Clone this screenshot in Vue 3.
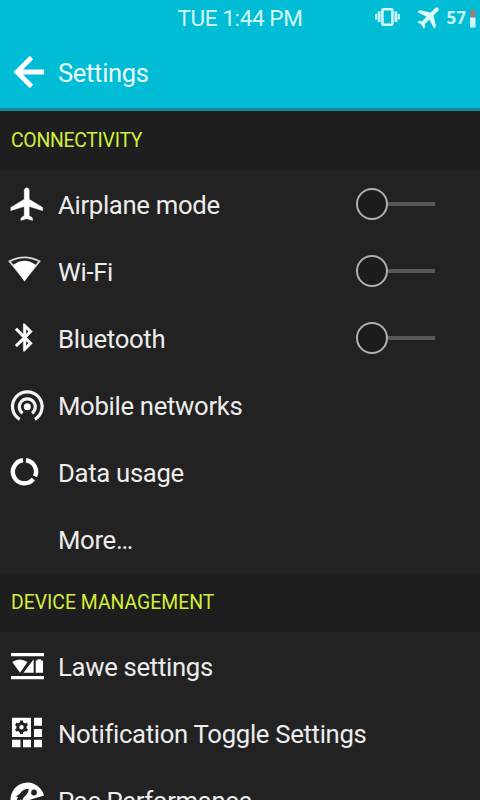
<script setup>
const connectivity = [
  { label: 'Airplane mode', icon: 'airplane', toggle: true },
  { label: 'Wi-Fi', icon: 'wifi', toggle: true },
  { label: 'Bluetooth', icon: 'bluetooth', toggle: true },
  { label: 'Mobile networks', icon: 'mobile' },
  { label: 'Data usage', icon: 'data' },
  { label: 'More…', icon: '' },
]
const device = [
  { label: 'Lawe settings', icon: 'lawe' },
  { label: 'Notification Toggle Settings', icon: 'toggles' },
  { label: 'Pac Performance', icon: 'pac' },
]
const sections = [
  { title: 'CONNECTIVITY', items: connectivity },
  { title: 'DEVICE MANAGEMENT', items: device },
]
</script>

<template>
  <div class="screen">
    <header class="top">
      <div class="status">
        <span class="clock">TUE 1:44 PM</span>
        <svg class="status-icons" viewBox="0 0 110 36" width="110" height="36">
          <g fill="#c5f3f8">
            <rect x="12.4" y="9.3" width="10" height="15.4" rx="1" fill="none" stroke="#d5f8fb" stroke-width="2.6" />
            <rect x="7.600" y="11.5" width="3" height="10.5" />
            <rect x="5" y="14" width="2.2" height="5.5" />
            <rect x="24.400" y="11.5" width="3" height="10.5" />
            <rect x="27.800" y="14" width="2.2" height="5.5" />
          </g>
          <path transform="translate(59.400 16.700) rotate(45) scale(1.220) translate(-11.5 -12)" fill="#e2fafc" stroke="#e2fafc" stroke-width="0.300" d="M21 16v-2l-8-5V3.500c0-.83-.67-1.500-1.500-1.500S10 2.670 10 3.500V9l-8 5v2l8-2.500V19l-2 1.500V22l3.500-1 3.500 1v-1.500L13 19v-5.500l8 2.500z" />
          <text class="percent" x="76.500" y="24">57</text>
          <rect x="101" y="9" width="3" height="2" fill="#8e8585" />
          <rect x="100" y="10" width="5.500" height="8" fill="#8e8585" />
          <rect x="100" y="17.500" width="5.500" height="10" fill="#d6f3f6" />
        </svg>
      </div>
      <div class="bar">
        <svg class="back" viewBox="0 0 58 74" width="58" height="74">
          <path d="M31.500 22.500L17 37L31.500 51.500M17 37H44" fill="none" stroke="#fff" stroke-width="4.800" />
        </svg>
        <h1>Settings</h1>
      </div>
    </header>

    <section v-for="s in sections" :key="s.title">
      <h2>{{ s.title }}</h2>
      <div v-for="item in s.items" :key="item.label" class="row">
        <svg class="icon" viewBox="0 0 58 67" width="58" height="67" fill="#fff">
          <path v-if="item.icon === 'airplane'" stroke="#fff" stroke-width="0.200" transform="translate(7.400 14.600) scale(1.680 1.630)" d="M21 16v-2l-8-5V3.500c0-.83-.67-1.500-1.500-1.500S10 2.670 10 3.500V9l-8 5v2l8-2.500V19l-2 1.500V22l3.500-1 3.500 1v-1.500L13 19v-5.500l8 2.500z" />
          <g v-else-if="item.icon === 'wifi'">
            <path d="M9.500 24.300Q24.500 16.500 39.500 24.300L24.500 42.500Z" fill="none" stroke="#d8d8d8" stroke-width="1.800" />
            <path d="M13 28Q24.500 19.500 36 28L24.500 44.500Z" />
          </g>
          <path v-else-if="item.icon === 'bluetooth'" stroke="#fff" stroke-width="0.300" transform="translate(8.200 17) scale(1.370)" d="M17.710 7.710L12 2h-1v7.590L6.410 5 5 6.410 10.590 12 5 17.590 6.410 19 11 14.410V22h1l5.710-5.710-4.300-4.290 4.300-4.290zM13 5.830l1.880 1.880L13 9.590V5.830zm1.880 10.460L13 18.170v-3.760l1.880 1.880z" />
          <g v-else-if="item.icon === 'mobile'" fill="none" stroke="#f4f4f4" stroke-width="3.200">
            <path d="M19.700 48.300A14.800 14.800 0 1 1 34.900 48.300" />
            <path d="M22.600 42.300A8 8 0 1 1 32 42.300" />
            <circle cx="27.300" cy="35.800" r="3.500" fill="#fff" stroke="none" />
          </g>
          <g v-else-if="item.icon === 'data'" fill="none" stroke="#fff" stroke-width="4.400">
            <path d="M26 22.200A11.600 11.600 0 0 1 35.100 38.300" />
            <path d="M33.300 41.200A11.600 11.600 0 1 1 23 22.200" />
          </g>
          <g v-else-if="item.icon === 'lawe'">
            <path d="M11 21H44V24.200H11ZM11 44H44V47.200H11Z" />
            <path d="M12.300 30Q19.500 25 27.500 30L20 40.800Z" />
            <path d="M23.500 40.700L33.700 27.300V40.700Z" />
            <path d="M35.700 28.500H37.500V27.300H41V28.500H43V40.700H35.700Z" />
          </g>
          <g v-else-if="item.icon === 'toggles'">
            <path d="M12 18.700H31V38H12ZM34 18.700H42V26.700H34ZM34 30H42V38H34ZM12 40.700H20.500V48.300H12ZM23 40.700H31V48.300H23ZM34 40.700H42V48.300H34Z" />
            <circle cx="21.500" cy="28.200" r="3.700" fill="none" stroke="#222" stroke-width="3" />
            <path d="M21.500 21.500V24M21.500 32.500V35M15.700 24.900L18 26.200M25 30.200L27.300 31.500M15.700 31.500L18 30.200M25 26.200L27.300 24.900" stroke="#222" stroke-width="3" />
          </g>
          <g v-else-if="item.icon === 'pac'">
            <path d="M27.500 34.500L44 29.500A17 17 0 1 0 43.600 39Z" />
            <circle cx="34" cy="26.500" r="2.900" fill="#222" />
            <path d="M28.800 22.800Q23 23 20 27.500L16 30.500L18 31L16 35.500L20.500 33.500L22 34.500L24 31Q28.500 28 28.800 22.800Z" fill="#222" />
          </g>
        </svg>
        <span class="label">{{ item.label }}</span>
        <span v-if="item.toggle" class="switch"><i class="knob"></i><i class="track"></i></span>
      </div>
    </section>
  </div>
</template>

<style>
body { background: #222; overflow: hidden; }
</style>

<style scoped>
.screen {
  width: 480px;
  height: 800px;
  overflow: hidden;
  background: #222;
  color: #ececec;
  font-family: Roboto, "Liberation Sans", sans-serif;
}
.top {
  height: 111px;
  box-sizing: border-box;
  background: #00bcd5;
  border-bottom: 3px solid #148a9a;
}
.status {
  display: grid;
  grid-template-columns: 110px 1fr 110px;
  height: 36px;
  align-items: start;
}
.clock {
  grid-column: 2;
  text-align: center;
  font-size: 22.500px;
  line-height: 36px;
  letter-spacing: -0.400px;
  color: #d4f6fa;
}
.percent { font: 700 17px "Open Sans", sans-serif; fill: #c5f3f8; }
.bar { display: flex; height: 72px; align-items: center; }
h1 { margin: 0; padding-top: 1px; font-size: 25.500px; letter-spacing: -0.300px; font-weight: 400; line-height: 72px; color: #e8fbfd; }
h2 {
  margin: 0;
  height: 59px;
  padding-left: 11px;
  box-sizing: border-box;
  background: #1e1e1e;
  font-size: 19.400px;
  font-weight: 400;
  line-height: 60px;
  color: #d3ee3b;
}
section:first-of-type { padding-bottom: 1px; }
section:first-of-type h2 { letter-spacing: -0.280px; }
.row { display: flex; height: 67px; align-items: center; }
.icon, .back { flex: none; }
.label { flex: 1; padding-top: 3px; font-size: 25.700px; letter-spacing: -0.310px; line-height: 67px; white-space: nowrap; }
.switch { display: flex; align-items: center; margin: 1px 45px 0 0; }
.knob {
  width: 32px;
  height: 32px;
  box-sizing: border-box;
  border: 2px solid #b0b0b0;
  border-radius: 50%;
  background: #1c1c1c;
}
.track { width: 47.500px; height: 4px; background: #585858; }
</style>
